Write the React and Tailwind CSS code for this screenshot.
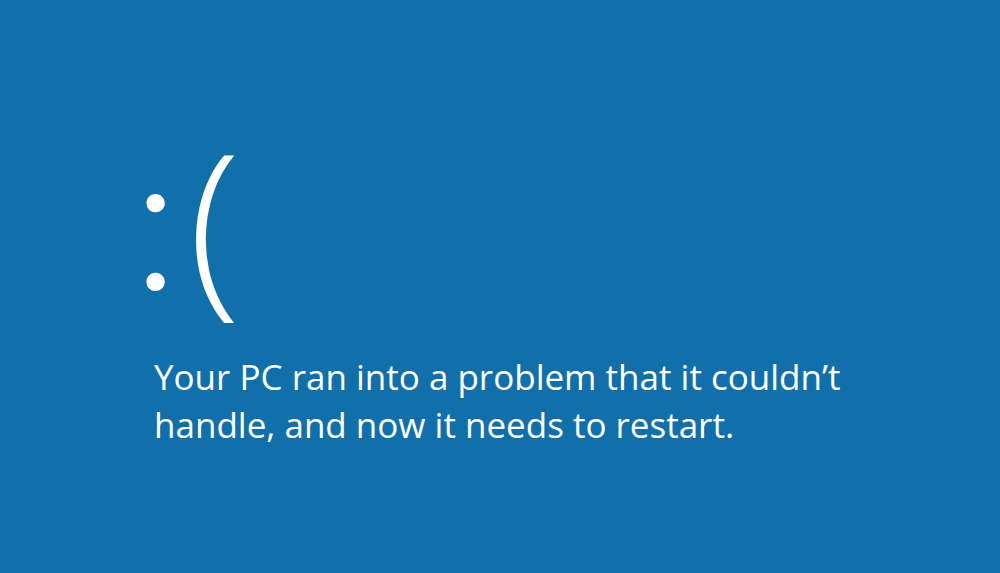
export default function App() {
  return (
    <div className="w-[1000px] h-[573px] bg-[#1170aa] overflow-hidden text-white" style={{ fontFamily: '"Open Sans", "Noto Sans", sans-serif' }}>
      <div className="pl-[140px] pt-[118px]">
        <div className="flex items-start h-[235px] leading-none">
          <span className="text-[197px] font-light -mt-[2px] -ml-[8px]" style={{ fontFamily: 'Lato, "Open Sans", sans-serif' }}>:</span>
          <span className="text-[192px] font-light ml-[9px] mt-[5px]">(</span>
        </div>
        <div className="pl-[14px] text-[35px] leading-[48px] font-normal">
          <div>Your PC ran into a problem that it couldn’t</div>
          <div>handle, and now it needs to restart.</div>
        </div>
      </div>
    </div>
  );
}
